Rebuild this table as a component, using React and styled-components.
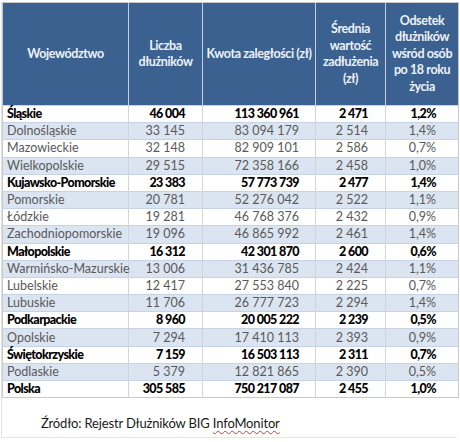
import React from 'react'
import styled, { createGlobalStyle } from 'styled-components'

const GlobalStyle = createGlobalStyle`
  html, body {
    margin: 0;
    padding: 0;
    background: #ffffff;
  }
  body {
    font-family: Lato, "Open Sans", "Liberation Sans", sans-serif;
  }
`

const Page = styled.div`
  width: 460px;
  height: 442px;
  box-sizing: border-box;
  padding: 2px 0 0 1px;
  overflow: hidden;
`

const Frame = styled.div`
  width: 456px;
  height: 436px;
  border-left: 1px solid #e2e2e2;
  border-bottom: 1px solid #e6e6e6;
  box-sizing: border-box;
`

const Table = styled.table`
  width: 456px;
  table-layout: fixed;
  border-collapse: collapse;
  border: 1px solid #c8c8c8;
  font-size: 12.5px;
`

const HeadCell = styled.th`
  height: 102px;
  padding: 0;
  background: #3a6190;
  color: #eef2f8;
  font-weight: 700;
  font-size: 12.5px;
  letter-spacing: -0.4px;
  line-height: 16.5px;
  white-space: nowrap;
  text-align: center;
  vertical-align: middle;
  border-left: 1px solid #c4cfdc;
  &:first-child {
    border-left: none;
  }
`

const Row = styled.tr`
  background: ${p => (p.$shade ? '#dbe5f1' : '#ffffff')};
  border-top: 1px solid #c5d3e4;
`

const Cell = styled.td`
  height: 16.2px;
  padding: 0 ${p => p.$pad || 0}px 0 ${p => (p.$name ? 4 : 0)}px;
  text-align: ${p => (p.$name ? 'left' : 'right')};
  color: ${p => (p.$bold ? '#000000' : '#595959')};
  font-weight: ${p => (p.$bold ? 900 : 400)};
  letter-spacing: ${p => (p.$bold ? '-0.6px' : '0')};
  line-height: 16px;
  white-space: nowrap;
  border-left: 1px solid #d4d4d4;
  &:first-child {
    border-left: none;
  }
`

const Source = styled.p`
  margin: 0;
  padding: 17px 0 0 39px;
  font-size: 13px;
  letter-spacing: -0.15px;
  color: #1a1a1a;
`

const Squiggle = styled.span`
  text-decoration: underline wavy #d23a3a;
  text-decoration-thickness: 1px;
  text-underline-offset: 2px;
`

const rows = [
  ['Śląskie', '46 004', '113 360 961', '2 471', '1,2%', true],
  ['Dolnośląskie', '33 145', '83 094 179', '2 514', '1,4%'],
  ['Mazowieckie', '32 148', '82 909 101', '2 586', '0,7%'],
  ['Wielkopolskie', '29 515', '72 358 166', '2 458', '1,0%'],
  ['Kujawsko-Pomorskie', '23 383', '57 773 739', '2 477', '1,4%', true],
  ['Pomorskie', '20 781', '52 276 042', '2 522', '1,1%'],
  ['Łódzkie', '19 281', '46 768 376', '2 432', '0,9%'],
  ['Zachodniopomorskie', '19 096', '46 865 992', '2 461', '1,4%'],
  ['Małopolskie', '16 312', '42 301 870', '2 600', '0,6%', true],
  ['Warmińsko-Mazurskie', '13 006', '31 436 785', '2 424', '1,1%'],
  ['Lubelskie', '12 417', '27 553 840', '2 225', '0,7%'],
  ['Lubuskie', '11 706', '26 777 723', '2 294', '1,4%'],
  ['Podkarpackie', '8 960', '20 005 222', '2 239', '0,5%', true],
  ['Opolskie', '7 294', '17 410 113', '2 393', '0,9%'],
  ['Świętokrzyskie', '7 159', '16 503 113', '2 311', '0,7%', true],
  ['Podlaskie', '5 379', '12 821 865', '2 390', '0,5%'],
  ['Polska', '305 585', '750 217 087', '2 455', '1,0%', true],
]

// right padding for each numeric column
const pads = [17, 16, 17, 22]

export default function App() {
  return (
    <>
      <GlobalStyle />
      <Page>
        <Frame>
          <Table>
            <colgroup>
              <col style={{ width: 126 }} />
              <col style={{ width: 74 }} />
              <col style={{ width: 113 }} />
              <col style={{ width: 70 }} />
              <col style={{ width: 73 }} />
            </colgroup>
            <thead>
              <tr>
                <HeadCell>Województwo</HeadCell>
                <HeadCell>Liczba<br />dłużników</HeadCell>
                <HeadCell>Kwota zaległości (zł)</HeadCell>
                <HeadCell>Średnia<br />wartość<br />zadłużenia<br />(zł)</HeadCell>
                <HeadCell>Odsetek<br />dłużników<br />wśród osób<br />po 18 roku<br />życia</HeadCell>
              </tr>
            </thead>
            <tbody>
              {rows.map((r, i) => (
                <Row key={r[0]} $shade={i % 2 === 1}>
                  <Cell $name $bold={r[5]}>{r[0]}</Cell>
                  {r.slice(1, 5).map((v, j) => (
                    <Cell key={j} $bold={r[5]} $pad={pads[j]}>{v}</Cell>
                  ))}
                </Row>
              ))}
            </tbody>
          </Table>
          <Source>
            Źródło: Rejestr Dłużników BIG <Squiggle>InfoMonitor</Squiggle>
          </Source>
        </Frame>
      </Page>
    </>
  )
}
